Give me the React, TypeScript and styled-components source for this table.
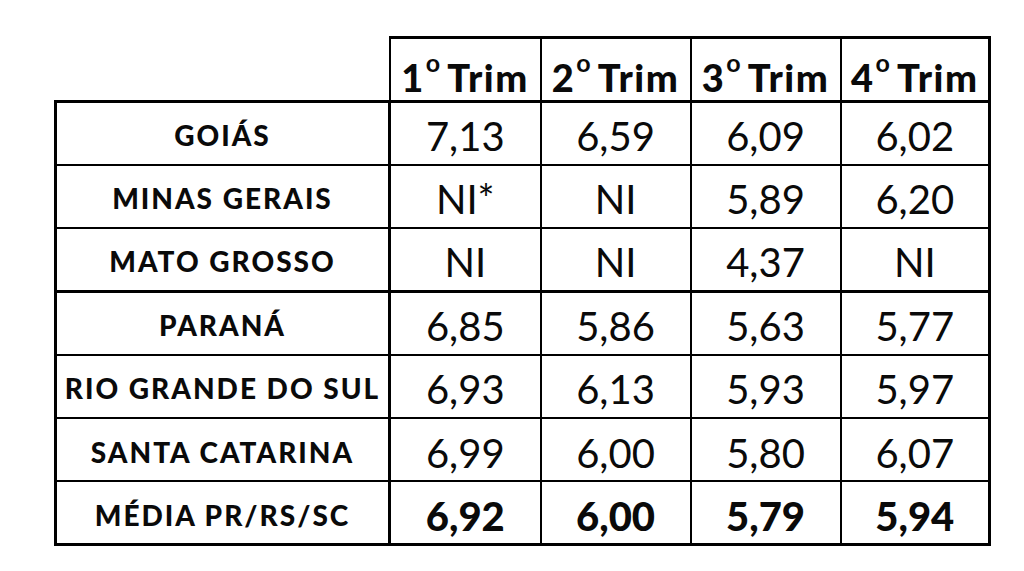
import React from "react";
import styled, { createGlobalStyle } from "styled-components";

const Global = createGlobalStyle`
  html, body { margin: 0; padding: 0; background: #fff; }
  body { font-family: Lato, "Open Sans", sans-serif; color: #0a0a0a; }
`;

const Page = styled.div`
  width: 1024px;
  height: 571px;
  box-sizing: border-box;
  padding: 36px 0 0 54px;
`;

const Table = styled.table`
  border-collapse: collapse;
  table-layout: fixed;
  width: 934px;
`;

const Col = styled.col<{ $w: number }>`
  width: ${(p) => p.$w}px;
`;

const Row = styled.tr<{ $thickBottom?: boolean }>`
  height: 63.3px;
  border-bottom: ${(p) => (p.$thickBottom ? "3px" : "2px")} solid #000;
`;

const Blank = styled.th`
  border: none;
`;

const HeadCell = styled.th<{ $last?: boolean }>`
  border-top: 3px solid #000;
  border-left: 2px solid #000;
  border-right: ${(p) => (p.$last ? "3px" : "2px")} solid #000;
  border-bottom: 3px solid #000;
  font-weight: 900;
  font-size: 38px;
  letter-spacing: 1.5px;
  text-align: center;
  padding: 8px 0 0;
  white-space: nowrap;
`;

const Sup = styled.span`
  font-size: 25px;
  font-weight: 700;
  letter-spacing: 0;
  vertical-align: 20px;
  margin: 0 7px 0 1px;
`;

const State = styled.td`
  border-left: 3px solid #000;
  border-right: 3px solid #000;
  font-weight: 900;
  font-size: 28px;
  letter-spacing: 2px;
  text-align: center;
  white-space: nowrap;
  padding: 4px 0 0;
`;

const Value = styled.td<{ $bold?: boolean; $last?: boolean }>`
  border-left: 2px solid #000;
  border-right: ${(p) => (p.$last ? "3px" : "2px")} solid #000;
  font-weight: ${(p) => (p.$bold ? 900 : 400)};
  font-size: 40px;
  text-align: center;
  white-space: nowrap;
  padding: 6px 0 0;
`;

type R = { name: string; vals: string[]; thick?: boolean; bold?: boolean };

const rows: R[] = [
  { name: "GOIÁS", vals: ["7,13", "6,59", "6,09", "6,02"] },
  { name: "MINAS GERAIS", vals: ["NI*", "NI", "5,89", "6,20"] },
  { name: "MATO GROSSO", vals: ["NI", "NI", "4,37", "NI"], thick: true },
  { name: "PARANÁ", vals: ["6,85", "5,86", "5,63", "5,77"] },
  { name: "RIO GRANDE DO SUL", vals: ["6,93", "6,13", "5,93", "5,97"] },
  { name: "SANTA CATARINA", vals: ["6,99", "6,00", "5,80", "6,07"] },
  { name: "MÉDIA PR/RS/SC", vals: ["6,92", "6,00", "5,79", "5,94"], thick: true, bold: true },
];

export default function App() {
  return (
    <Page>
      <Global />
      <Table>
        <colgroup>
          <Col $w={334} />
          <Col $w={151} />
          <Col $w={150} />
          <Col $w={150} />
          <Col $w={149} />
        </colgroup>
        <thead>
          <Row $thickBottom>
            <Blank />
            {[1, 2, 3, 4].map((n) => (
              <HeadCell key={n} $last={n === 4}>
                {n}
                <Sup>o</Sup>Trim
              </HeadCell>
            ))}
          </Row>
        </thead>
        <tbody>
          {rows.map((r) => (
            <Row key={r.name} $thickBottom={r.thick}>
              <State>{r.name}</State>
              {r.vals.map((v, i) => (
                <Value key={i} $bold={r.bold} $last={i === 3}>
                  {v}
                </Value>
              ))}
            </Row>
          ))}
        </tbody>
      </Table>
    </Page>
  );
}
